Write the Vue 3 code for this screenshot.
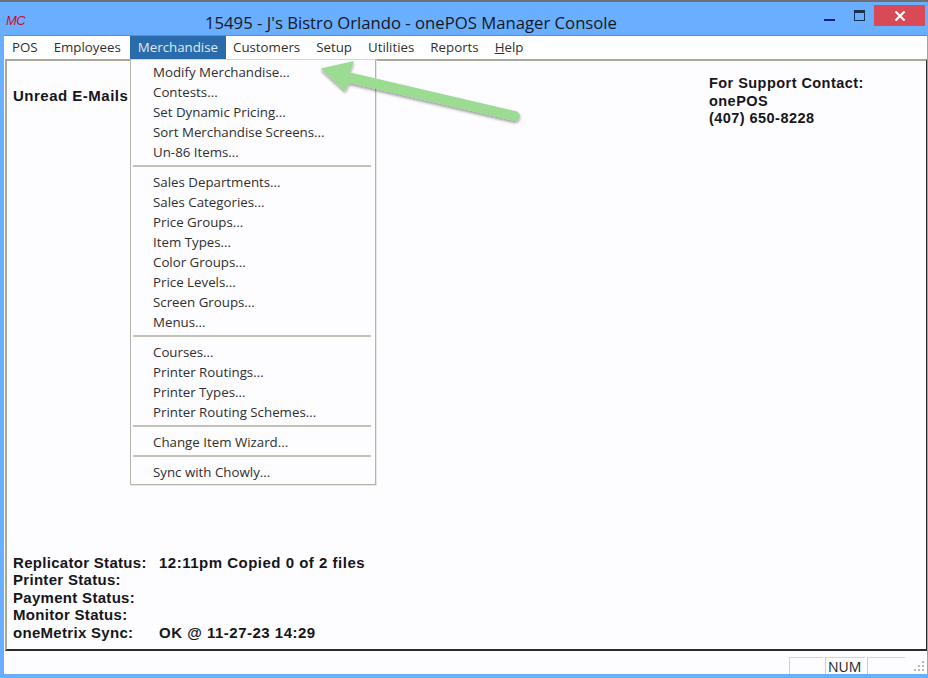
<script setup>
const menus = [
  { label: 'POS' },
  { label: 'Employees' },
  { label: 'Merchandise', active: true },
  { label: 'Customers' },
  { label: 'Setup' },
  { label: 'Utilities' },
  { label: 'Reports' },
  { label: 'Help', underline: true },
]
const groups = [
  ['Modify Merchandise...', 'Contests...', 'Set Dynamic Pricing...', 'Sort Merchandise Screens...', 'Un-86 Items...'],
  ['Sales Departments...', 'Sales Categories...', 'Price Groups...', 'Item Types...', 'Color Groups...', 'Price Levels...', 'Screen Groups...', 'Menus...'],
  ['Courses...', 'Printer Routings...', 'Printer Types...', 'Printer Routing Schemes...'],
  ['Change Item Wizard...'],
  ['Sync with Chowly...'],
]
const statuses = [
  ['Replicator Status:', '12:11pm Copied 0 of 2 files'],
  ['Printer Status:', ''],
  ['Payment Status:', ''],
  ['Monitor Status:', ''],
  ['oneMetrix Sync:', 'OK @ 11-27-23 14:29'],
]
</script>

<template>
  <div class="window">
    <header class="titlebar">
      <span class="logo">MC</span>
      <span class="title">15495 - J's Bistro Orlando - onePOS Manager Console</span>
      <div class="controls">
        <span class="min"></span>
        <span class="max"></span>
        <span class="close">
          <svg width="12" height="12" viewBox="0 0 12 12"><path d="M1.5 1.5 10.5 10.5M10.5 1.5 1.5 10.5" stroke="#fff" stroke-width="2.2" fill="none"/></svg>
        </span>
      </div>
    </header>
    <div class="body">
      <nav class="menubar">
        <span v-for="m in menus" :key="m.label" class="menu" :class="{ active: m.active }">
          <template v-if="m.underline"><u>H</u>elp</template>
          <template v-else>{{ m.label }}</template>
        </span>
      </nav>
      <main class="client">
        <div class="top">
          <div class="unread">Unread E-Mails</div>
          <div class="support">For Support Contact:<br>onePOS<br>(407) 650-8228</div>
        </div>
        <div class="status">
          <div v-for="s in statuses" :key="s[0]" class="row">
            <span class="key">{{ s[0] }}</span><span>{{ s[1] }}</span>
          </div>
        </div>
      </main>
      <footer class="statusbar">
        <span class="cell c1"></span>
        <span class="cell c2">NUM</span>
        <span class="cell c3"></span>
        <svg class="grip" width="13" height="13" viewBox="0 0 13 13" fill="#b9b9b9">
          <rect x="10" y="1" width="2" height="2"/><rect x="10" y="5" width="2" height="2"/><rect x="6" y="5" width="2" height="2"/>
          <rect x="10" y="9" width="2" height="2"/><rect x="6" y="9" width="2" height="2"/><rect x="2" y="9" width="2" height="2"/>
        </svg>
      </footer>
    </div>

    <div class="dropdown">
      <template v-for="(g, i) in groups" :key="i">
        <div v-if="i" class="sep"></div>
        <div v-for="item in g" :key="item" class="item">{{ item }}</div>
      </template>
    </div>

    <svg class="arrow" width="240" height="90" viewBox="300 50 240 90">
      <defs>
        <filter id="sh" x="-10%" y="-20%" width="120%" height="150%">
          <feDropShadow dx="0" dy="2" stdDeviation="1.5" flood-color="#000" flood-opacity=".4"/>
        </filter>
      </defs>
      <path d="M322 69 353 62 349 73 516 112Q520 114 519 117 518 120 514 120L349 82 345 90Z" fill="#9bdc92" stroke="#9bdc92" stroke-width="1.5" stroke-linejoin="round" filter="url(#sh)"/>
    </svg>
  </div>
</template>

<style>
html, body { margin: 0; background: #69aeff; }
</style>

<style scoped>
.window {
  position: relative;
  width: 928px;
  height: 678px;
  box-sizing: border-box;
  display: flex;
  flex-direction: column;
  overflow: hidden;
  background: #69aeff;
  border-top: 2px solid #6d6f73;
  padding: 0 1px 4px 4px;
}
.titlebar {
  height: 34px;
  flex: none;
  display: flex;
  align-items: center;
  position: relative;
  border-bottom: 1px solid #5b8fcc;
  box-sizing: border-box;
}
.logo {
  font: italic 13px "Liberation Sans", sans-serif;
  color: #c8101c;
  margin: 3px 0 0 2px;
  letter-spacing: -.6px;
}
.title {
  position: absolute;
  left: 201px;
  top: 10px;
  font: 16.7px/22px "Open Sans", sans-serif;
  color: #14181f;
  white-space: nowrap;
}
.controls {
  margin-left: auto;
  align-self: flex-start;
  display: flex;
  align-items: flex-start;
}
.min {
  width: 11px;
  height: 2px;
  background: #10207a;
  margin: 17px 19px 0 0;
}
.max {
  width: 9px;
  height: 7px;
  border: 1.5px solid #17324f;
  border-top-width: 3px;
  margin: 8px 9px 0 0;
}
.close {
  width: 51px;
  height: 21px;
  margin: 3px 2px 0 0;
  background: #d94a57;
  display: flex;
  align-items: center;
  justify-content: center;
}
.body {
  flex: 1;
  display: flex;
  flex-direction: column;
  background: #fdfdff;
  min-height: 0;
}
.menubar {
  height: 23px;
  flex: none;
  display: flex;
  background: #fff;
  font: 13.3px/23px "Open Sans", sans-serif;
  color: #2f2f2f;
}
.menu {
  padding: 0 8px;
  white-space: nowrap;
}
.menu:nth-child(2) { padding-right: 9px; }
.menu:nth-child(4) { padding-left: 7px; }
.menu.active {
  background: #2a6cab;
  color: #dfe9f4;
}
.client {
  flex: 1;
  min-height: 0;
  display: flex;
  flex-direction: column;
  justify-content: space-between;
  box-sizing: border-box;
  margin-left: 1px;
  border-top: 2px solid #a9a99b;
  border-left: 2px solid #a9a99b;
  border-bottom: 2px solid #2b2b2b;
  border-right: 1px solid #2b2b2b;
  background: #fdfdff;
  font: bold 15px/17.5px "Liberation Sans", sans-serif;
  letter-spacing: .5px;
  color: #16161a;
  padding: 0 0 8px 6px;
}
.top { display: flex; }
.unread {
  margin-top: 26px;
  width: 696px;
  flex: none;
}
.support {
  margin-top: 14px;
  font-size: 14.5px;
  letter-spacing: .45px;
}
.row { display: flex; }
.key {
  width: 146px;
  flex: none;
  letter-spacing: .3px;
}
.statusbar {
  height: 23px;
  flex: none;
  display: flex;
  align-items: flex-end;
  font: 14px/18px "Open Sans", sans-serif;
  color: #222;
  position: relative;
  padding-left: 785px;
  background: #fdfdff;
}
.cell {
  height: 17px;
  box-sizing: border-box;
  border-top: 1px solid #d6d6d0;
  border-left: 1px solid #cfcfc9;
  margin-right: 2px;
  padding-left: 2px;
  line-height: 17px;
}
.c1 { width: 34px; }
.c2 { width: 40px; }
.c3 { width: 38px; }
.grip { position: absolute; right: 2px; bottom: 1px; }
.dropdown {
  position: absolute;
  left: 130px;
  top: 57px;
  width: 246px;
  height: 426px;
  box-sizing: border-box;
  padding: 2px 4px 0 2px;
  background: #fdfdff;
  border: 1px solid #b4b4aa;
  border-top-color: #d8d8d2;
  font: 13.3px/20px "Open Sans", sans-serif;
  color: #2f2f2f;
  box-shadow: 1px 1px 0 #e6e6e2;
}
.item {
  height: 20px;
  padding-left: 20px;
  white-space: nowrap;
}
.sep {
  height: 2px;
  margin: 3px 0 5px;
  background: #c2c2b6;
}
.arrow {
  position: absolute;
  left: 300px;
  top: 48px;
}
</style>
